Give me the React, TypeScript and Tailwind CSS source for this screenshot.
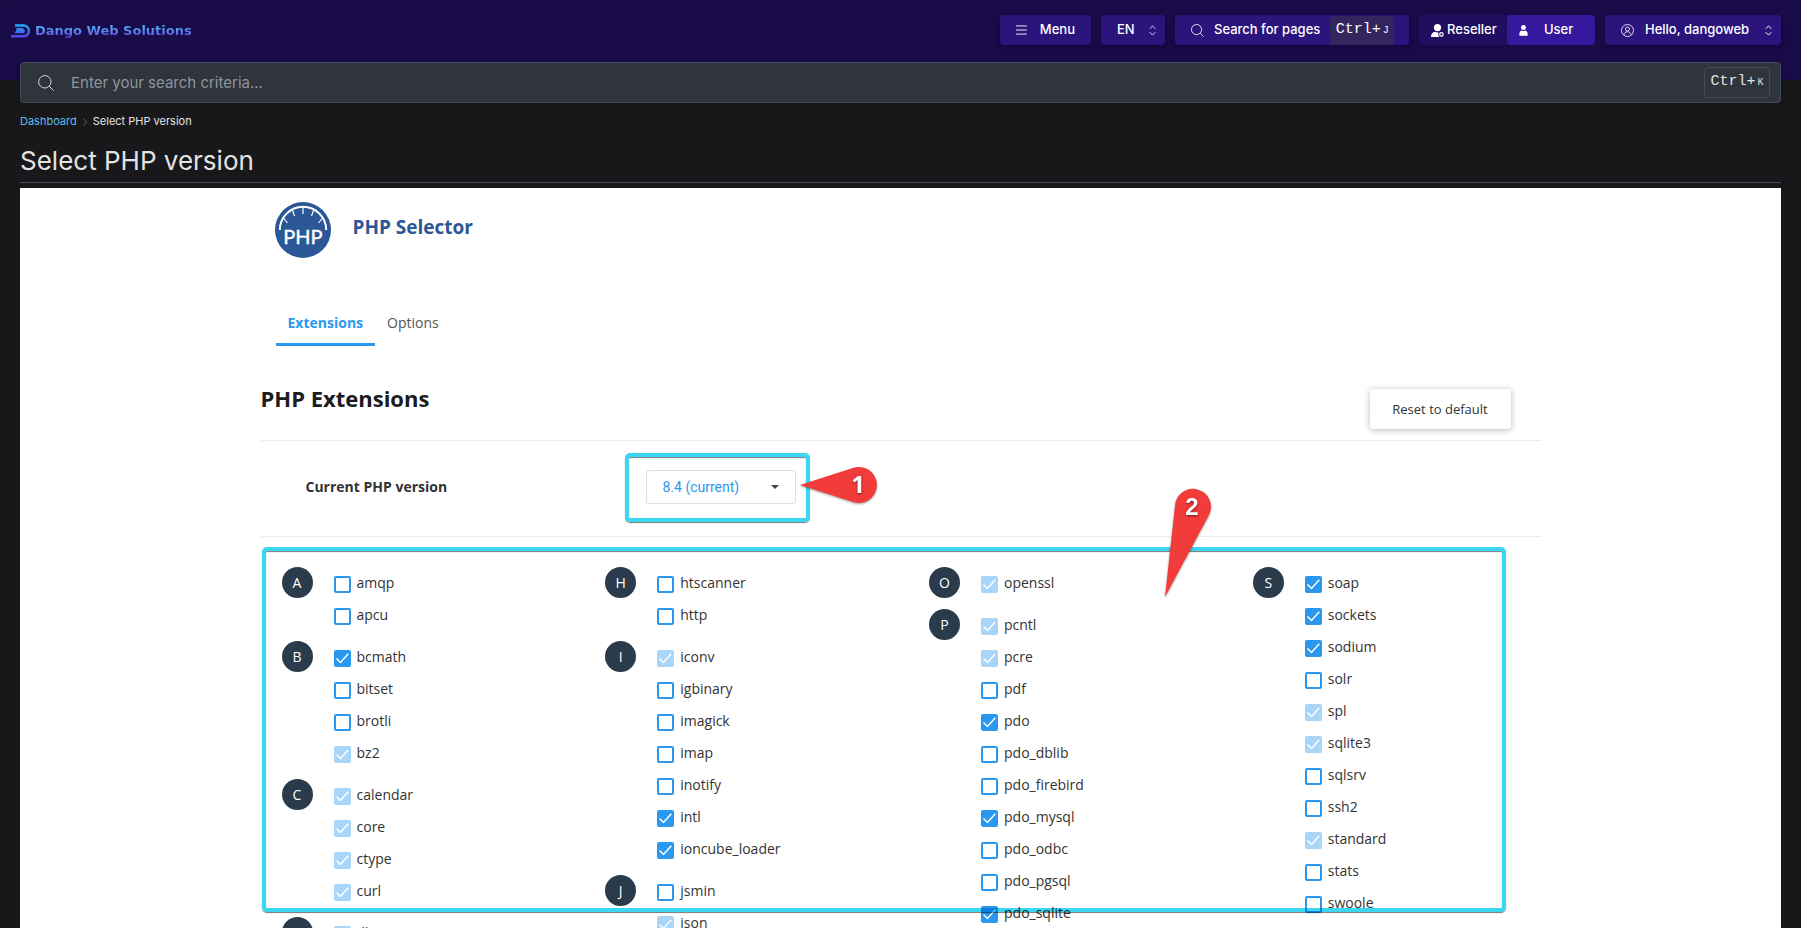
import { useState } from "react";
import { clsx } from "clsx";

type Status = "on" | "off" | "locked";

type Group = {
  letter: string;
  items: [string, Status][];
};

const columns: Group[][] = [
  [
    { letter: "A", items: [["amqp", "off"], ["apcu", "off"]] },
    { letter: "B", items: [["bcmath", "on"], ["bitset", "off"], ["brotli", "off"], ["bz2", "locked"]] },
    { letter: "C", items: [["calendar", "locked"], ["core", "locked"], ["ctype", "locked"], ["curl", "locked"]] },
    { letter: "D", items: [["dba", "locked"]] },
  ],
  [
    { letter: "H", items: [["htscanner", "off"], ["http", "off"]] },
    {
      letter: "I",
      items: [
        ["iconv", "locked"],
        ["igbinary", "off"],
        ["imagick", "off"],
        ["imap", "off"],
        ["inotify", "off"],
        ["intl", "on"],
        ["ioncube_loader", "on"],
      ],
    },
    { letter: "J", items: [["jsmin", "off"], ["json", "locked"]] },
  ],
  [
    { letter: "O", items: [["openssl", "locked"]] },
    {
      letter: "P",
      items: [
        ["pcntl", "locked"],
        ["pcre", "locked"],
        ["pdf", "off"],
        ["pdo", "on"],
        ["pdo_dblib", "off"],
        ["pdo_firebird", "off"],
        ["pdo_mysql", "on"],
        ["pdo_odbc", "off"],
        ["pdo_pgsql", "off"],
        ["pdo_sqlite", "on"],
      ],
    },
  ],
  [
    {
      letter: "S",
      items: [
        ["soap", "on"],
        ["sockets", "on"],
        ["sodium", "on"],
        ["solr", "off"],
        ["spl", "locked"],
        ["sqlite3", "locked"],
        ["sqlsrv", "off"],
        ["ssh2", "off"],
        ["standard", "locked"],
        ["stats", "off"],
        ["swoole", "off"],
      ],
    },
  ],
];

const SearchIcon = ({ className }: { className: string }) => (
  <svg viewBox="0 0 16 16" fill="none" stroke="currentColor" className={className}>
    <circle cx="6.8" cy="6.8" r="6.2" />
    <path d="M11.3 11.3 15.6 15.6" />
  </svg>
);

const ChevronsIcon = () => (
  <svg viewBox="0 0 7 11" fill="none" stroke="currentColor" className="pointer-events-none h-[11px] w-[7px] shrink-0">
    <path d="M.7 3.8 3.5 1l2.8 2.8M.7 7.2 3.5 10l2.8-2.8" />
  </svg>
);

const Highlight = ({ className }: { className: string }) => (
  <div
    className={clsx(
      "pointer-events-none absolute rounded-[5px] border-4 border-[#3bd6f2] mix-blend-multiply shadow-[0_1px_1px_#777,inset_0_1px_1px_#777]",
      className
    )}
  />
);

const Logo = () => (
  <a href="#" className="flex items-center gap-[5px] pt-0.5">
    <svg viewBox="0 0 19 14" className="h-[14px] w-[19px]" fill="none">
      <defs>
        <linearGradient id="mark" x1="0" y1="0" x2="0" y2="14" gradientUnits="userSpaceOnUse">
          <stop offset="0" stopColor="#12b8f8" />
          <stop offset="1" stopColor="#5a38e8" />
        </linearGradient>
      </defs>
      <path d="M4 1.5h8.500a5 5 0 0 1 0 10.800H0" stroke="url(#mark)" strokeWidth="2.600" />
      <path d="M5.500 4h5a3.300 3.300 0 0 1 2.700 5.200H3C4.800 8 5.600 6.500 5.500 4z" fill="url(#mark)" />
    </svg>
    <span className="bg-gradient-to-b from-[#4bb4fb] from-25% to-[#5b33d6] to-85% bg-clip-text font-['DejaVu_Sans',sans-serif] text-[13px] leading-5 font-bold text-transparent">
      Dango Web Solutions
    </span>
  </a>
);

const TopBar = () => (
  <header className="h-20 shrink-0 rounded-tl-sm bg-[#190a48] pt-[15px] pr-5 pl-[11px] text-[13px] font-medium text-white">
    <div className="flex h-[30px] items-center justify-between">
      <Logo />
      <div className="flex h-full gap-2.5">
        <button className="flex w-[91px] items-center gap-[13px] rounded-sm bg-[#2b157d] px-4 shadow-md">
          <svg viewBox="0 0 12 10" stroke="currentColor" className="h-2.5 w-3">
            <path d="M0 .5h12M0 5h12M0 9.5h12" />
          </svg>
          Menu
        </button>

        <div className="grid w-16 items-center rounded-sm bg-[#2b157d] shadow-md">
          <select aria-label="Language" className="col-start-1 row-start-1 h-full w-full appearance-none pl-4">
            <option>EN</option>
          </select>
          <div className="pointer-events-none col-start-1 row-start-1 mr-[9px] justify-self-end text-white/80">
            <ChevronsIcon />
          </div>
        </div>

        <button className="flex w-[234px] items-center gap-2.5 rounded-sm bg-[#2b157d] pr-[15px] pl-4 whitespace-nowrap shadow-md">
          <SearchIcon className="size-[13px] shrink-0" />
          <span className="flex-1 text-left">Search for pages</span>
          <kbd className="flex h-[29px] w-16 items-center justify-center gap-0.5 rounded-sm bg-[#33265f] font-['Liberation_Mono',monospace] text-[15px] font-normal">
            Ctrl+<span className="text-[10px]">J</span>
          </kbd>
        </button>

        <div className="flex w-[176px] rounded-sm bg-[#210e60]">
          <button className="flex w-[88px] items-center gap-[3px] pl-3">
            <svg viewBox="0 0 13 13" fill="currentColor" className="size-[13px]">
              <circle cx="6.5" cy="3.6" r="3.6" />
              <path d="M0 13c0-3.4 1.6-4.8 4-5.2 1 .7 2.4.9 3.6.6-.6 1.600-.2 3.400.7 4.600z" />
              <circle cx="10.400" cy="10.400" r="1.700" fill="none" stroke="currentColor" strokeWidth="1.200" />
            </svg>
            Reseller
          </button>
          <button className="flex w-[88px] items-center gap-4 rounded-sm bg-[#35189b] pl-3">
            <svg viewBox="0 0 9 11" fill="currentColor" className="h-[11px] w-[9px]">
              <circle cx="4.500" cy="2.600" r="2.500" />
              <path d="M.4 10.800C0 7.500 1 5.800 2.700 5.400c1 .7 2.600.7 3.600 0C8 5.800 9 7.500 8.600 10.800z" />
            </svg>
            User
          </button>
        </div>

        <button className="flex w-[176px] items-center gap-[11px] rounded-sm bg-[#2b157d] pr-[9px] pl-4 whitespace-nowrap shadow-md">
          <svg viewBox="0 0 13 13" fill="none" stroke="currentColor" className="size-[13px] shrink-0 text-white/80">
            <circle cx="6.500" cy="6.500" r="6" />
            <circle cx="6.500" cy="5" r="2" />
            <path d="M3 10.800c.2-2 1.400-3 3.500-3s3.300 1 3.500 3" />
          </svg>
          <span className="flex-1 text-left">Hello, dangoweb</span>
          <ChevronsIcon />
        </button>
      </div>
    </div>
  </header>
);

const PhpBadge = () => (
  <svg viewBox="0 0 56 56" className="size-14">
    <circle cx="28" cy="28" r="28" fill="#2b5797" />
    <g fill="none" stroke="#fff">
      <path d="M4.800 28a23.200 23.200 0 0 1 46.400 0" strokeWidth="2" />
      <path d="M28 5v7M17.500 8.500l2 5.500M38.500 8.500l-2 5.500M8.500 16l4 5M47.500 16l-4 5" strokeWidth="1.200" />
    </g>
    <text x="28" y="42" fill="#fff" stroke="#fff" strokeWidth=".4" fontSize="20" textAnchor="middle" className="font-['Lato',sans-serif]">
      PHP
    </text>
  </svg>
);

const Extension = ({ name, status }: { name: string; status: Status }) => {
  const [checked, setChecked] = useState(status !== "off");

  return (
    <label className="flex h-8 gap-1.5">
      <span className="mt-[9px] grid size-[17px]">
        <input
          type="checkbox"
          checked={checked}
          disabled={status === "locked"}
          onChange={(e) => setChecked(e.target.checked)}
          className="peer col-start-1 row-start-1 size-[17px] appearance-none rounded-[2px] border-2 border-[#2b98f0] checked:bg-[#2b98f0] disabled:opacity-40"
        />
        <svg
          viewBox="0 0 17 17"
          fill="none"
          stroke="#fff"
          strokeWidth="1.500"
          className="pointer-events-none invisible relative col-start-1 row-start-1 size-[17px] peer-checked:visible"
        >
          <path d="M2.500 8.500 6.500 12.500 14.300 3.800" />
        </svg>
      </span>
      <span className="leading-8">{name}</span>
    </label>
  );
};

const App = () => {
  const [version, setVersion] = useState("8.4 (current)");

  return (
    <div className="flex h-screen flex-col overflow-hidden bg-[#18181a] font-['Inter',sans-serif] text-[#e3e3e3]">
      <TopBar />

      <div className="relative mx-5 -mt-[18px] flex h-[41px] shrink-0 items-center gap-[17px] rounded-sm border border-[#434b59] bg-[#30343d] pr-2.5 pl-[17px] shadow-md">
        <SearchIcon className="size-4 text-[#d8d8d8]" />
        <input
          aria-label="Search"
          placeholder="Enter your search criteria..."
          className="flex-1 pt-0.5 text-[15px] outline-none placeholder:text-[#8f959d]"
        />
        <kbd className="flex h-[31px] w-[66px] items-center justify-center gap-0.5 rounded-sm border border-[#434b59] font-['Liberation_Mono',monospace] text-[15px]">
          Ctrl+<span className="text-[10px]">K</span>
        </kbd>
      </div>

      <nav className="mx-5 mt-[9px] flex h-[18px] shrink-0 items-center text-[11px]">
        <a href="#" className="text-[#5cbcf0]">Dashboard</a>
        <svg viewBox="0 0 4 8" fill="none" stroke="#666" className="mx-[6px] mt-0.5 h-2 w-1">
          <path d="M.5.500 3.500 4 .5 7.500" />
        </svg>
        <span>Select PHP version</span>
      </nav>
      <h1 className="mx-5 mt-4 shrink-0 border-b border-[#434b59] pb-1.5 text-[26px] leading-[30px]">
        Select PHP version
      </h1>

      <main className="mx-5 mt-[5px] flex-1 overflow-y-auto bg-white font-['Open_Sans',sans-serif] text-sm text-[#333] [scrollbar-width:none]">
        <div className="mx-auto max-w-[1280px] pt-[14px]">
          <div className="ml-3.5 flex gap-[22px]">
            <PhpBadge />
            <h2 className="mt-[11px] text-[19px] leading-7 font-bold text-[#2b5797]">PHP Selector</h2>
          </div>

          <div role="tablist" className="mt-11 ml-[15px] flex">
            <button role="tab" aria-selected="true" className="h-11 border-b-3 border-[#2b98f0] px-3 font-bold text-[#2b98f0]">
              Extensions
            </button>
            <button role="tab" aria-selected="false" className="h-11 border-b-3 border-transparent px-3 text-[#555]">
              Options
            </button>
          </div>

          <div className="mt-7 flex justify-between border-b border-[#ececec] pb-[11px]">
            <h2 className="mt-[9px] text-[22px] leading-[30px] font-bold text-[#1c1c1c]">PHP Extensions</h2>
            <button className="mt-[15px] mr-[30px] h-10 w-[141px] rounded-[3px] bg-white text-[13px] shadow-[0_1px_6px_#00000048]">
              Reset to default
            </button>
          </div>

          <div className="flex h-24 items-center border-b border-[#ececec] pb-[3px] pl-[45px]">
            <label htmlFor="version" className="w-[340px] font-bold">Current PHP version</label>
            <div className="relative grid h-[34px] w-[150px] items-center">
              <select
                id="version"
                value={version}
                onChange={(e) => setVersion(e.target.value)}
                className="col-start-1 row-start-1 h-[34px] appearance-none rounded-[3px] border border-[#dcdcec] bg-white pl-4 font-['Roboto',sans-serif] text-[#2b98f0]"
              >
                <option>8.4 (current)</option>
                <option>8.3</option>
                <option>8.2</option>
              </select>
              <svg viewBox="0 0 8 4" fill="#444" className="pointer-events-none relative col-start-1 row-start-1 mr-[17px] h-1 w-2 justify-self-end">
                <path d="M0 0h8L4 4z" />
              </svg>
              <Highlight className="-top-[17px] -right-[14px] -bottom-[18px] -left-[21px]" />
              <svg viewBox="0 0 78 40" className="pointer-events-none absolute -top-[5px] left-[154px] h-10 w-[78px] drop-shadow-[0_1px_1px_#00000060]">
                <path d="M0 20 53 3A18 18 0 1 1 53 37z" fill="#f23c3c" />
                <text x="58" y="28" fill="#fff" fontSize="24" fontWeight="700" textAnchor="middle" className="font-['Open_Sans',sans-serif] drop-shadow-[0_1px_1px_#00000090]">
                  1
                </text>
              </svg>
            </div>
          </div>

          <div className="relative">
            <div className="grid grid-cols-4 gap-x-9 pt-[30px] pl-[21px]">
              {columns.map((groups, i) => (
                <div key={i} className="space-y-2.5">
                  {groups.map((group) => (
                    <div key={group.letter} className="flex items-start gap-[21px]">
                      <div className="flex size-[31px] items-center justify-center rounded-full bg-[#2a3b4b] text-white">
                        {group.letter}
                      </div>
                      <div>
                        {group.items.map(([name, status]) => (
                          <Extension key={name} name={name} status={status} />
                        ))}
                      </div>
                    </div>
                  ))}
                </div>
              ))}
            </div>
            <Highlight className="top-2.5 right-[35px] left-px h-[365px]" />
            <svg viewBox="0 0 50 112" className="pointer-events-none absolute -top-[50px] left-[902px] h-28 w-[50px] drop-shadow-[0_1px_1px_#00000060]">
              <path d="M2 110 12 19A18 18 0 1 1 46 28z" fill="#f23c3c" />
              <text x="29" y="28" fill="#fff" fontSize="24" fontWeight="700" textAnchor="middle" className="font-['Liberation_Sans',sans-serif] drop-shadow-[0_1px_1px_#00000090]">
                2
              </text>
            </svg>
          </div>
        </div>
      </main>
    </div>
  );
};

export default App;
